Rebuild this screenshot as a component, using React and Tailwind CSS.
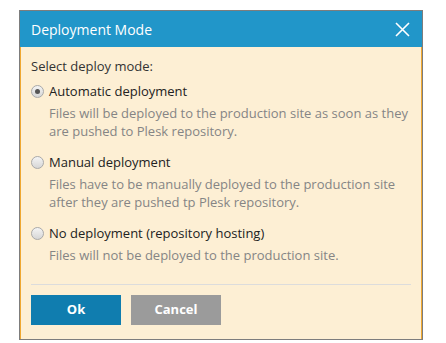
import React from 'react';

const options = [
  {
    id: 'auto',
    label: 'Automatic deployment',
    desc: ['Files will be deployed to the production site as soon as they', 'are pushed to Plesk repository.'],
    checked: true,
  },
  {
    id: 'manual',
    label: 'Manual deployment',
    desc: ['Files have to be manually deployed to the production site', 'after they are pushed tp Plesk repository.'],
  },
  {
    id: 'none',
    label: 'No deployment (repository hosting)',
    desc: ['Files will not be deployed to the production site.'],
  },
];

const Radio = ({ checked }) => (
  <span className="relative flex h-[13px] w-[13px] shrink-0 items-center justify-center rounded-full border border-[#a9a9a9] bg-gradient-to-b from-[#f4f4f4] to-[#d6d6d6]">
    {checked && <span className="h-[5px] w-[5px] rounded-full bg-[#555]" />}
  </span>
);

export default function App() {
  return (
    <div className="min-h-[343px] bg-white pl-[19px] pt-[10px]" style={{ fontFamily: '"Open Sans", "Noto Sans", sans-serif' }}>
      <div className="w-[404px] border border-[#7d7d7d]">
        {/* Header */}
        <div className="flex h-[36px] items-center justify-between bg-[#2196c9] pl-[11px] pr-[12px]">
          <span className="text-[14px] text-white">Deployment Mode</span>
          <svg width="15" height="15" viewBox="0 0 15 15" className="text-white">
            <path d="M1 1 L14 14 M14 1 L1 14" stroke="currentColor" strokeWidth="1.6" />
          </svg>
        </div>

        {/* Body */}
        <div className="border-x border-[#f0a830] bg-[#fdefd4] px-[10px] pb-[14px] pt-[10px]">
          <p className="text-[13px] leading-[18px] text-[#333]">Select deploy mode:</p>
          <div className="mt-[7px] flex flex-col gap-[13px]">
            {options.map((opt) => (
              <div key={opt.id}>
                <div className="flex items-center gap-[5px] text-[13px] leading-[19px] text-[#222]">
                  <Radio checked={opt.checked} />
                  <span>{opt.label}</span>
                </div>
                <div className="mt-[3px] pl-[18px] text-[13px] leading-[18px] text-[#858585]">
                  {opt.desc.map((line, i) => (
                    <div key={i}>{line}</div>
                  ))}
                </div>
              </div>
            ))}
          </div>

          <div className="mt-[20px] border-t border-[#dcdcdc]" />

          <div className="mt-[10px] flex gap-[10px]">
            <button className="h-[30px] w-[90px] bg-[#107daf] text-[13px] font-bold text-white">Ok</button>
            <button className="h-[30px] w-[90px] bg-[#9b9b9b] text-[13px] font-bold text-white">Cancel</button>
          </div>
        </div>
      </div>
    </div>
  );
}
